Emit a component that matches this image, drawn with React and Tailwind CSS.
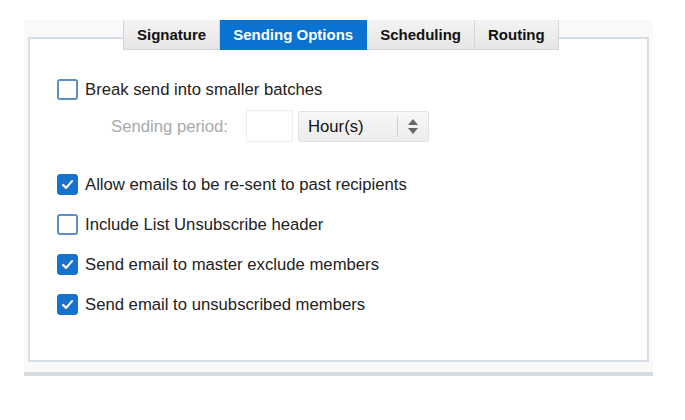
import { useState } from 'react';

const tabs = ['Signature', 'Sending Options', 'Scheduling', 'Routing'];

function Checkbox({ checked, onChange }) {
  return (
    <button
      onClick={onChange}
      className={`w-[21px] h-[21px] rounded-[3px] flex items-center justify-center shrink-0 ${
        checked ? 'bg-[#1672cc] border border-[#1672cc]' : 'bg-white border-2 border-[#5a8fc8]'
      }`}
    >
      {checked && (
        <svg viewBox="0 0 20 20" className="w-[15px] h-[15px]">
          <path d="M4 10.5 L8.2 14.5 L16 5.5" fill="none" stroke="white" strokeWidth="2.8" strokeLinecap="round" strokeLinejoin="round" />
        </svg>
      )}
    </button>
  );
}

export default function App() {
  const [active, setActive] = useState(1);
  const [opts, setOpts] = useState({
    batches: false,
    resend: true,
    unsubHeader: false,
    masterExclude: true,
    unsubscribed: true,
  });
  const toggle = (k) => setOpts((o) => ({ ...o, [k]: !o[k] }));

  const rows = [
    ['resend', 'Allow emails to be re-sent to past recipients'],
    ['unsubHeader', 'Include List Unsubscribe header'],
    ['masterExclude', 'Send email to master exclude members'],
    ['unsubscribed', 'Send email to unsubscribed members'],
  ];

  return (
    <div className="w-[685px] h-[420px] bg-white pt-[20px] pl-[24px] font-['Liberation_Sans',Arial,sans-serif] text-[#222]">
      <div className="w-[629px] bg-[#f9f9f9] pb-[10px] px-[4px]">
        {/* Tabs */}
        <div className="relative z-10 flex ml-[95px] h-[30px]">
          {tabs.map((t, i) => (
            <button
              key={t}
              onClick={() => setActive(i)}
              className={`h-full px-[13px] text-[15px] font-bold leading-none border-b border-r ${
                i === 0 ? 'border-l' : ''
              } ${
                active === i
                  ? 'bg-[#0a72d1] text-white border-[#0a72d1]'
                  : 'bg-gradient-to-b from-[#f4f4f4] to-[#e6e6e6] text-[#111] border-[#cfd6dc]'
              }`}
            >
              {t}
            </button>
          ))}
        </div>

        {/* Panel */}
        <div className="-mt-[13px] h-[325px] bg-white border-2 border-[#d5dee6] pt-[40px] pl-[27px]">
          <div className="flex items-center gap-[7px]">
            <Checkbox checked={opts.batches} onChange={() => toggle('batches')} />
            <span className="text-[16.7px] leading-[21px]">Break send into smaller batches</span>
          </div>

          <div className="flex items-center mt-[10px] ml-[54px]">
            <span className="text-[16.7px] leading-[21px] text-[#a9a9a9] w-[135px]">Sending period:</span>
            <div className="w-[47px] h-[32px] bg-white border border-[#eeeeee]" />
            <div className="ml-[5px] w-[131px] h-[31px] flex items-center bg-gradient-to-b from-[#f7f7f7] to-[#ececec] border border-[#e2e2e2] rounded-[2px]">
              <span className="flex-1 pl-[9px] text-[16.7px] leading-[21px] text-[#111]">Hour(s)</span>
              <div className="w-px h-[21px] bg-[#cfcfcf]" />
              <div className="w-[30px] flex flex-col items-center justify-center gap-[3px]">
                <svg viewBox="0 0 10 6" className="w-[10px] h-[6px]"><path d="M0 6 L5 0 L10 6 Z" fill="#666" /></svg>
                <svg viewBox="0 0 10 6" className="w-[10px] h-[6px]"><path d="M0 0 L10 0 L5 6 Z" fill="#666" /></svg>
              </div>
            </div>
          </div>

          <div className="mt-[32px] flex flex-col gap-[19px]">
            {rows.map(([k, label]) => (
              <div key={k} className="flex items-center gap-[7px]">
                <Checkbox checked={opts[k]} onChange={() => toggle(k)} />
                <span className="text-[16.7px] leading-[21px]">{label}</span>
              </div>
            ))}
          </div>
        </div>
      </div>
      <div className="w-[629px] h-[4px] bg-[#d7dce0]" />
    </div>
  );
}
